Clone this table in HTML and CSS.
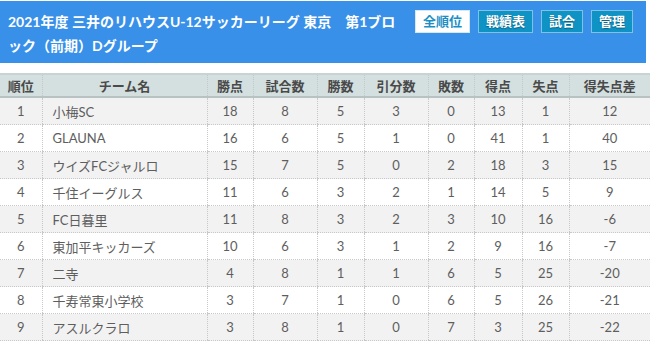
FILE: index.html
```html
<!DOCTYPE html>
<html lang="ja">
<head>
<meta charset="utf-8">
<title>順位表</title>
<link rel="stylesheet" href="styles.css">
</head>
<body>
<div class="page">
  <header class="bar">
    <h1 class="title">2021年度 三井のリハウスU-12サッカーリーグ 東京　第1ブロック（前期）Dグループ</h1>
    <nav class="btns">
      <a class="btn btn-active">全順位</a>
      <a class="btn">戦績表</a>
      <a class="btn">試合</a>
      <a class="btn">管理</a>
    </nav>
  </header>
  <table class="standings">
    <colgroup>
      <col class="c-rank"><col class="c-name"><col class="c-pts"><col class="c-gp"><col class="c-w"><col class="c-d"><col class="c-l"><col class="c-gf"><col class="c-ga"><col class="c-gd">
    </colgroup>
    <thead>
      <tr><th>順位</th><th>チーム名</th><th>勝点</th><th>試合数</th><th>勝数</th><th>引分数</th><th>敗数</th><th>得点</th><th>失点</th><th>得失点差</th></tr>
    </thead>
    <tbody>
      <tr><td>1</td><td class="name">小梅SC</td><td>18</td><td>8</td><td>5</td><td>3</td><td>0</td><td>13</td><td>1</td><td>12</td></tr>
      <tr><td>2</td><td class="name">GLAUNA</td><td>16</td><td>6</td><td>5</td><td>1</td><td>0</td><td>41</td><td>1</td><td>40</td></tr>
      <tr><td>3</td><td class="name">ウイズFCジャルロ</td><td>15</td><td>7</td><td>5</td><td>0</td><td>2</td><td>18</td><td>3</td><td>15</td></tr>
      <tr><td>4</td><td class="name">千住イーグルス</td><td>11</td><td>6</td><td>3</td><td>2</td><td>1</td><td>14</td><td>5</td><td>9</td></tr>
      <tr><td>5</td><td class="name">FC日暮里</td><td>11</td><td>8</td><td>3</td><td>2</td><td>3</td><td>10</td><td>16</td><td>-6</td></tr>
      <tr><td>6</td><td class="name">東加平キッカーズ</td><td>10</td><td>6</td><td>3</td><td>1</td><td>2</td><td>9</td><td>16</td><td>-7</td></tr>
      <tr><td>7</td><td class="name">二寺</td><td>4</td><td>8</td><td>1</td><td>1</td><td>6</td><td>5</td><td>25</td><td>-20</td></tr>
      <tr><td>8</td><td class="name">千寿常東小学校</td><td>3</td><td>7</td><td>1</td><td>0</td><td>6</td><td>5</td><td>26</td><td>-21</td></tr>
      <tr><td>9</td><td class="name">アスルクラロ</td><td>3</td><td>8</td><td>1</td><td>0</td><td>7</td><td>3</td><td>25</td><td>-22</td></tr>
    </tbody>
  </table>
</div>
</body>
</html>
```
FILE: styles.css
```css
html, body {
  margin: 0;
  padding: 0;
  background: #ffffff;
}
.page {
  width: 650px;
  padding-top: 1px;
  font-family: Lato, "Noto Sans CJK JP", sans-serif;
}
.bar {
  width: 646px;
  height: 62px;
  box-sizing: border-box;
  background: #3890e8;
  padding: 9px 13px 0 8px;
  display: flex;
  align-items: flex-start;
  gap: 6px;
}
.title {
  flex: 1;
  margin: 0;
  color: #ffffff;
  font-size: 14px;
  font-weight: bold;
  line-height: 24px;
  line-break: loose;
  font-family: Lato, "Noto Sans CJK JP", sans-serif;
}
.btns {
  display: flex;
  gap: 8px;
  flex-shrink: 0;
}
.btn {
  display: block;
  height: 23px;
  box-sizing: border-box;
  padding: 0 7px;
  border: 1px solid #7fc3e4;
  background: #0f92c4;
  color: #ffffff;
  font-size: 13px;
  font-weight: bold;
  line-height: 21px;
  text-shadow: 0 1px 1px rgba(0, 0, 0, 0.35);
}
.btn-active {
  background: #ffffff;
  color: #1b8fc6;
  border-color: #d8e8f2;
  text-shadow: none;
}
.standings {
  margin-top: 10px;
  width: 650px;
  table-layout: fixed;
  border-collapse: collapse;
  font-size: 13px;
  color: #5e5e5e;
}
.c-rank { width: 42px; }
.c-name { width: 165px; }
.c-pts { width: 46px; }
.c-gp { width: 64px; }
.c-w { width: 47px; }
.c-d { width: 64px; }
.c-l { width: 46px; }
.c-gf { width: 48px; }
.c-ga { width: 47px; }
.c-gd { width: 81px; }
.standings th {
  background: #d4e0e0;
  color: #4a4a4a;
  font-weight: bold;
  height: 21px;
  padding: 0;
  border-top: 2px solid #c9d3d3;
  border-bottom: 2px solid #b9c2c2;
  border-left: 1px dotted #c0c8c8;
  text-align: center;
}
.standings th:first-child,
.standings td:first-child {
  border-left: none;
}
.standings td {
  height: 26px;
  padding: 0;
  text-align: center;
  border-bottom: 1px dotted #c8c8c8;
  border-left: 1px dotted #c8c8c8;
}
.standings tbody tr:nth-child(odd) td {
  background: #f2f2f2;
}
.standings td.name {
  text-align: left;
  padding-left: 10px;
}
```
